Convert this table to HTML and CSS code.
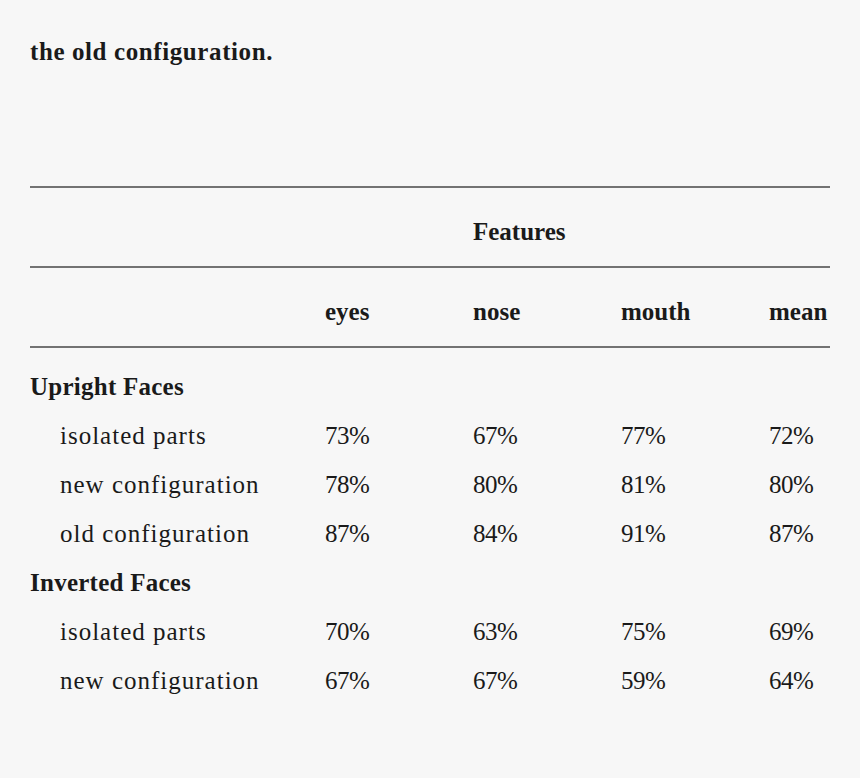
FILE: index.html
```html
<!DOCTYPE html>
<html lang="en">
<head>
<meta charset="utf-8">
<title>Features table</title>
<link rel="stylesheet" href="styles.css">
</head>
<body>
<div class="page">
  <p class="lead">the old configuration.</p>
  <div class="table">
    <div class="rule"></div>
    <div class="row head">
      <span class="cell"></span>
      <span class="cell span">Features</span>
    </div>
    <div class="rule"></div>
    <div class="row head">
      <span class="cell"></span>
      <span class="cell">eyes</span>
      <span class="cell">nose</span>
      <span class="cell">mouth</span>
      <span class="cell">mean</span>
    </div>
    <div class="rule"></div>
    <div class="body">
      <div class="row group"><span class="cell">Upright Faces</span></div>
      <div class="row">
        <span class="cell label">isolated parts</span>
        <span class="cell num">73%</span><span class="cell num">67%</span><span class="cell num">77%</span><span class="cell num">72%</span>
      </div>
      <div class="row">
        <span class="cell label">new configuration</span>
        <span class="cell num">78%</span><span class="cell num">80%</span><span class="cell num">81%</span><span class="cell num">80%</span>
      </div>
      <div class="row">
        <span class="cell label">old configuration</span>
        <span class="cell num">87%</span><span class="cell num">84%</span><span class="cell num">91%</span><span class="cell num">87%</span>
      </div>
      <div class="row group"><span class="cell">Inverted Faces</span></div>
      <div class="row">
        <span class="cell label">isolated parts</span>
        <span class="cell num">70%</span><span class="cell num">63%</span><span class="cell num">75%</span><span class="cell num">69%</span>
      </div>
      <div class="row">
        <span class="cell label">new configuration</span>
        <span class="cell num">67%</span><span class="cell num">67%</span><span class="cell num">59%</span><span class="cell num">64%</span>
      </div>
    </div>
  </div>
</div>
</body>
</html>
```

FILE: styles.css
```css
html, body {
  margin: 0;
  padding: 0;
  background: #f7f7f7;
}

.page {
  padding: 37px 30px 0 30px;
  font-family: "Liberation Serif", "Times New Roman", serif;
  font-size: 25px;
  line-height: 30px;
  color: #1a1a1a;
}

.lead {
  margin: 0 0 119px 0;
  font-weight: bold;
  letter-spacing: 0.6px;
}

.table {
  width: 800px;
}

.rule {
  height: 2px;
  background: #737373;
}

.row {
  display: grid;
  grid-template-columns: 295px 148px 148px 148px 61px;
  height: 49px;
  align-items: center;
}

.row.head {
  height: 78px;
  align-items: start;
  padding-top: 29px;
  box-sizing: border-box;
  font-weight: bold;
}

.span {
  grid-column: 2 / 6;
  padding-left: 148px;
}

.body {
  padding-top: 14px;
}

.row .cell {
  white-space: nowrap;
}

.group {
  font-weight: bold;
  letter-spacing: 0.25px;
}

.label {
  padding-left: 30px;
  letter-spacing: 1px;
}

.num {
  letter-spacing: -0.5px;
}
```
